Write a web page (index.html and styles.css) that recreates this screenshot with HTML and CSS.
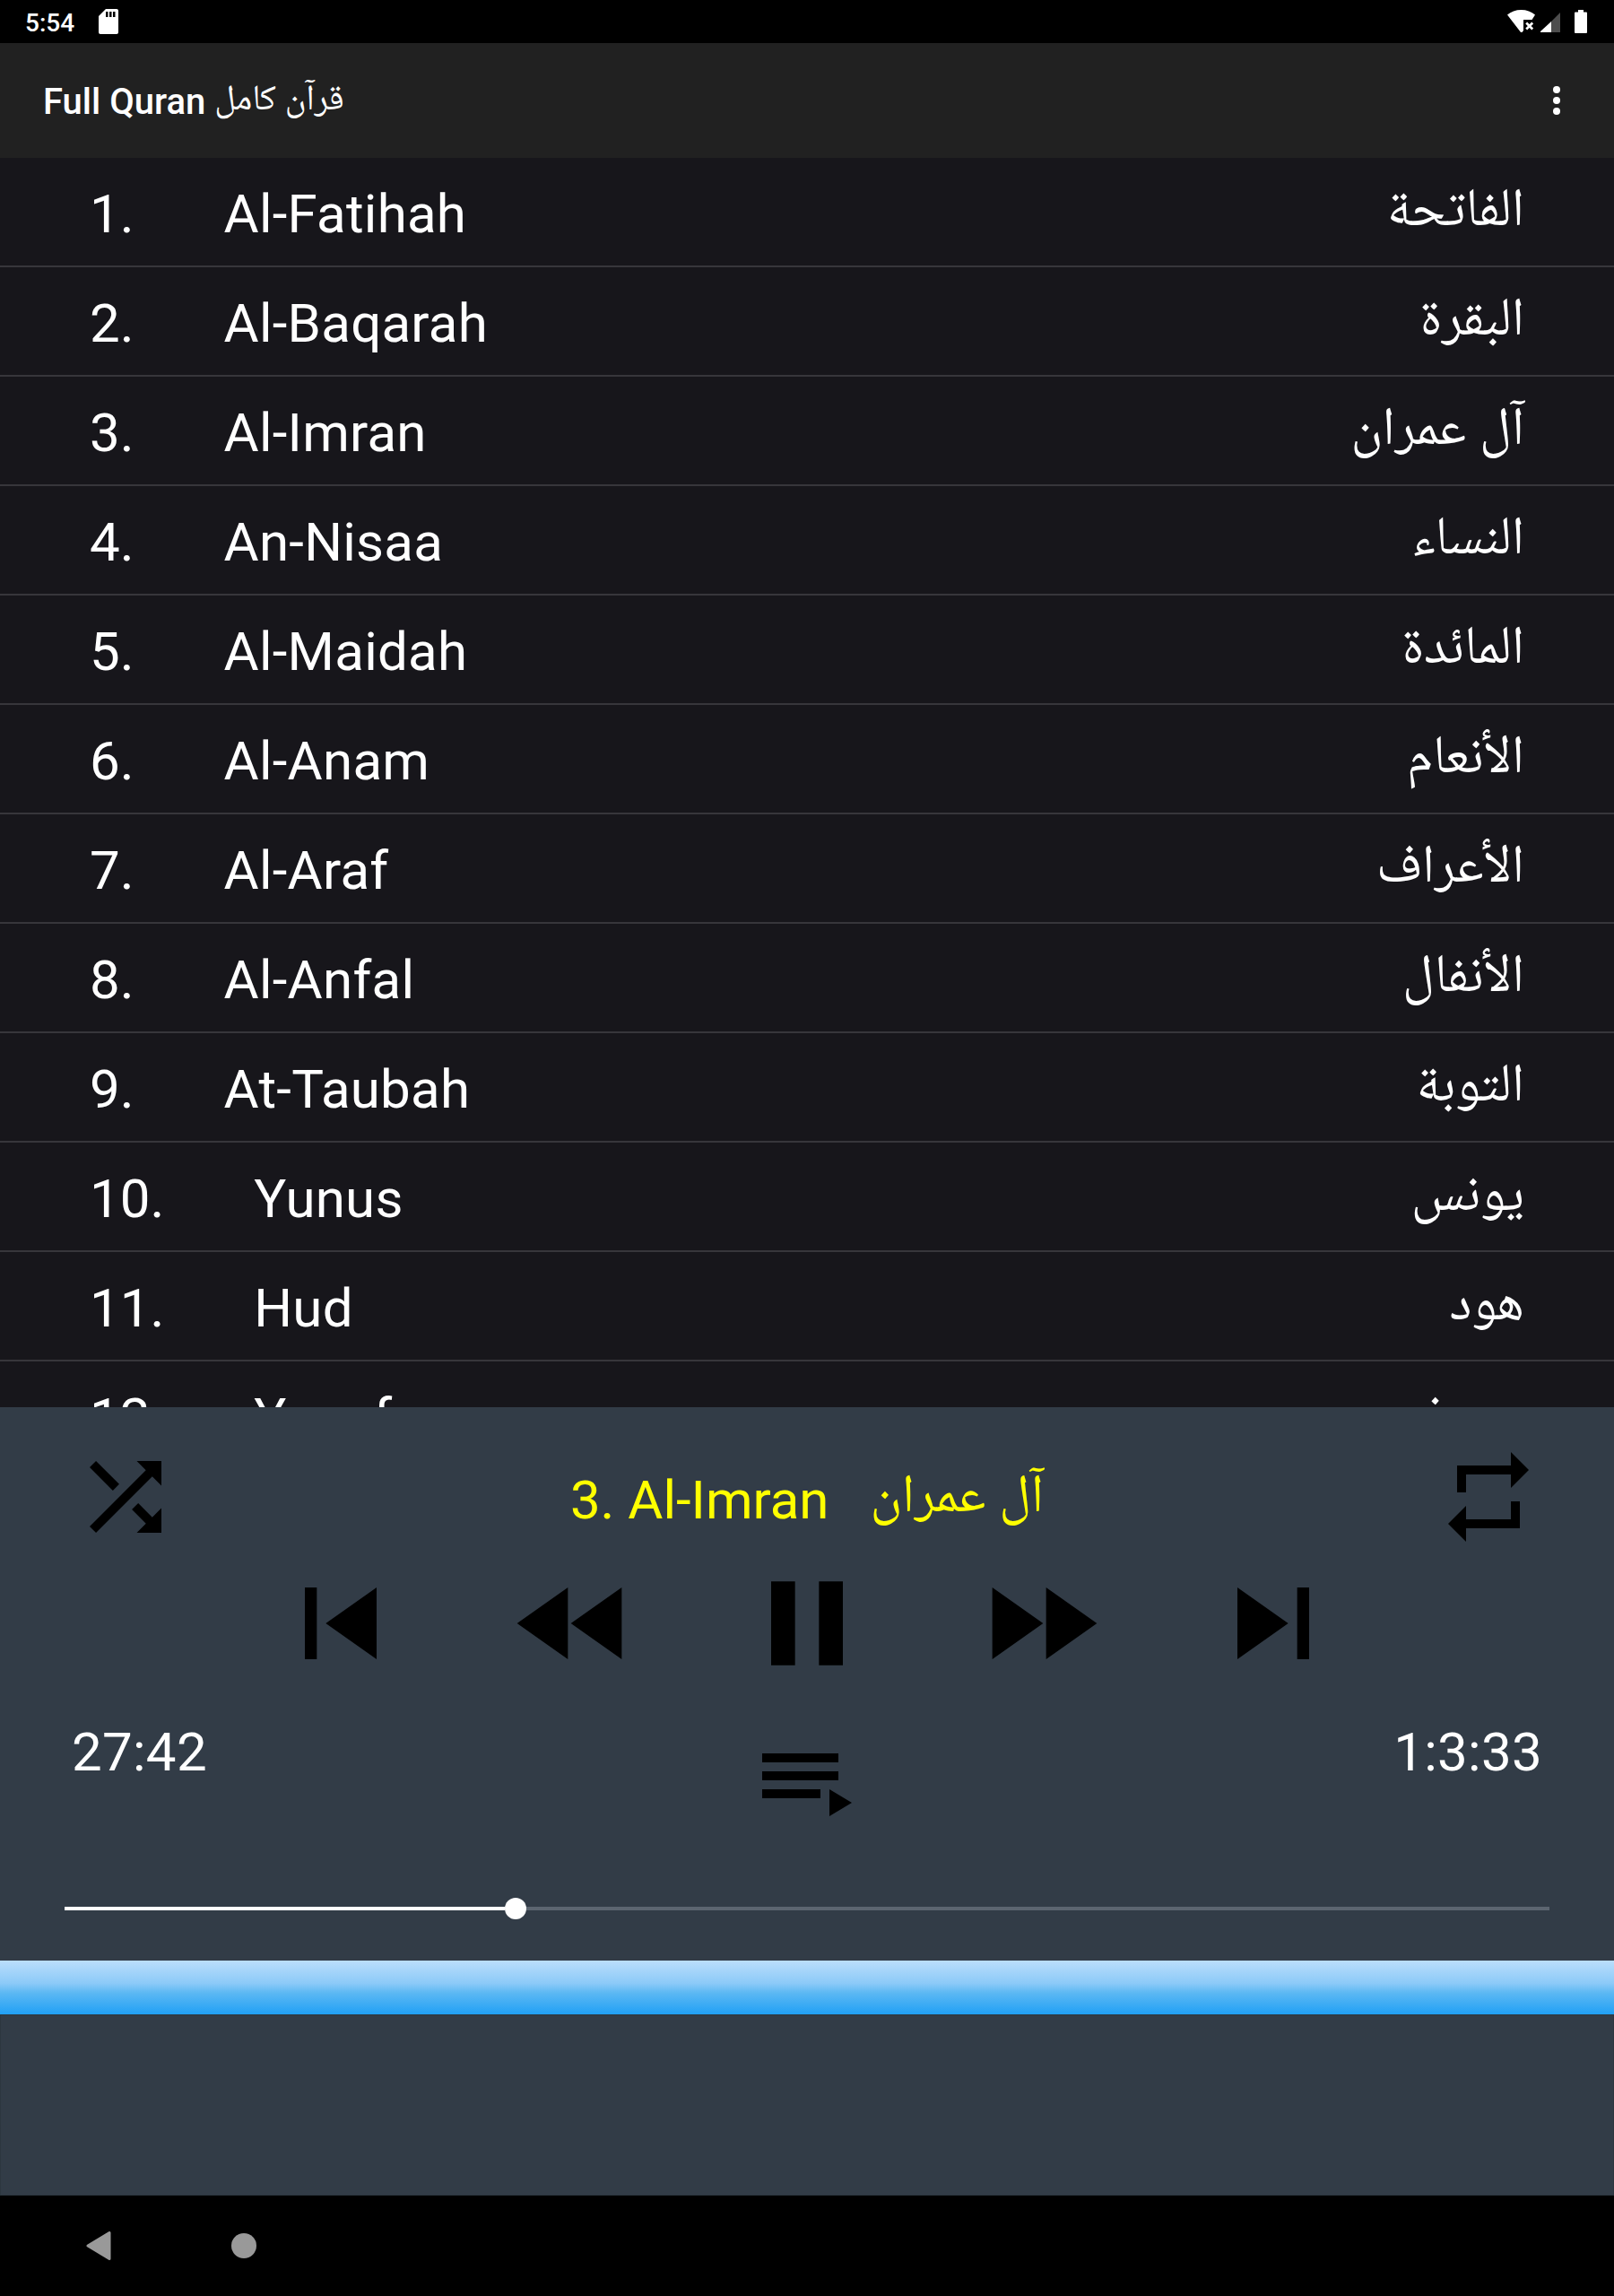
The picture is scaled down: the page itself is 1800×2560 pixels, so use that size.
FILE: index.html
```html
<!DOCTYPE html>
<html lang="en">
<head>
  <meta charset="UTF-8" />
  <title>Full Quran</title>
  <link rel="stylesheet" href="styles.css">
</head>
<body>
  <div class="status-bar">
    <span class="clock">5:54</span>
    <svg class="sd" width="22" height="28" viewBox="0 0 22 28">
      <path fill="#fff" fill-rule="evenodd" d="M8 0h12a2 2 0 0 1 2 2v24a2 2 0 0 1-2 2H2a2 2 0 0 1-2-2V8zM8 3v6h2.500V3zm4 0v6h2.500V3zm4 0v6h2.500V3z"/>
    </svg>
    <svg class="wifi" width="31" height="25" viewBox="0 0 31 25">
      <path fill="#fff" d="M0 5.500C4 2 9.500 0 15.500 0S27 2 31 5.500L27.500 11H18v12l-1.500 2h-1.500z"/>
      <path stroke="#fff" stroke-width="2.600" d="M21.200 14.500l7 7m0-7l-7 7"/>
    </svg>
    <svg class="signal" width="22" height="22" viewBox="0 0 22 22">
      <path fill="#4d4d4d" d="M22 0v22H12V10z"/>
      <path fill="#fff" d="M12 10v12H0v-1z"/>
    </svg>
    <svg class="battery" width="14" height="26" viewBox="0 0 14 26">
      <path fill="#fff" d="M4 0h6v2.500h3a1 1 0 0 1 1 1V25a1 1 0 0 1-1 1H1a1 1 0 0 1-1-1V3.500a1 1 0 0 1 1-1h3z"/>
    </svg>
  </div>

  <div class="toolbar">
    <h1><span>Full Quran</span><span class="ar">قرآن كامل</span></h1>
    <svg width="8" height="32" viewBox="0 0 8 32" fill="#fff">
      <circle cx="4" cy="4" r="4"/><circle cx="4" cy="16" r="4"/><circle cx="4" cy="28" r="4"/>
    </svg>
  </div>

  <ul class="surahs">
    <li><span class="num">1.</span><span class="name">Al-Fatihah</span><span class="ar">الفاتحة</span></li>
    <li><span class="num">2.</span><span class="name">Al-Baqarah</span><span class="ar">البقرة</span></li>
    <li><span class="num">3.</span><span class="name">Al-Imran</span><span class="ar">آل عمران</span></li>
    <li><span class="num">4.</span><span class="name">An-Nisaa</span><span class="ar">النساء</span></li>
    <li><span class="num">5.</span><span class="name">Al-Maidah</span><span class="ar">المائدة</span></li>
    <li><span class="num">6.</span><span class="name">Al-Anam</span><span class="ar">الأنعام</span></li>
    <li><span class="num">7.</span><span class="name">Al-Araf</span><span class="ar">الأعراف</span></li>
    <li><span class="num">8.</span><span class="name">Al-Anfal</span><span class="ar">الأنفال</span></li>
    <li><span class="num">9.</span><span class="name">At-Taubah</span><span class="ar">التوبة</span></li>
    <li><span class="num">10.</span><span class="name">Yunus</span><span class="ar">يونس</span></li>
    <li><span class="num">11.</span><span class="name">Hud</span><span class="ar">هود</span></li>
    <li><span class="num">12.</span><span class="name">Yusuf</span><span class="ar">يوسف</span></li>
  </ul>

  <div class="player">
    <div class="now-playing">
      <svg class="icon" viewBox="0 0 24 24"><path d="M10.590 9.170L5.410 4 4 5.410l5.170 5.170 1.420-1.410zM14.500 4l2.040 2.040L4 18.590 5.410 20 17.960 7.460 20 9.500V4h-5.500zm.33 9.410l-1.410 1.410 3.130 3.130L14.500 20H20v-5.500l-2.040 2.040-3.130-3.130z"/></svg>
      <div class="title"><span>3. Al-Imran</span><span class="ar">آل عمران</span></div>
      <svg class="icon" viewBox="0 0 24 24"><path d="M7 7h10v3l4-4-4-4v3H5v6h2V7zm10 10H7v-3l-4 4 4 4v-3h12v-6h-2v4z"/></svg>
    </div>
    <div class="controls">
      <svg viewBox="0 0 24 24"><path d="M6 6h2v12H6zm3.500 6l8.500 6V6z"/></svg>
      <svg viewBox="0 0 24 24"><path d="M11 18V6l-8.500 6 8.500 6zm.5-6l8.500 6V6l-8.500 6z"/></svg>
      <svg viewBox="0 0 24 24"><path d="M6 19h4V5H6v14zm8-14v14h4V5h-4z"/></svg>
      <svg viewBox="0 0 24 24"><path d="M4 18l8.500-6L4 6v12zm9-12v12l8.500-6L13 6z"/></svg>
      <svg viewBox="0 0 24 24"><path d="M6 18l8.500-6L6 6v12zM16 6v12h2V6h-2z"/></svg>
    </div>
    <div class="times">
      <span>27:42</span>
      <svg class="icon" viewBox="0 0 24 24"><path d="M2 7h17v2H2zm0 4h17v2H2zm0 4h13v2H2zm15 0v6l5-3z"/></svg>
      <span class="total">1:3:33</span>
    </div>
    <div class="seek">
      <div class="played"></div>
      <div class="thumb"></div>
      <div class="rest"></div>
    </div>
  </div>

  <div class="strip"></div>
  <div class="ad"></div>

  <div class="nav-bar">
    <svg width="28" height="32" viewBox="0 0 28 32"><path d="M26 1.500v29L2 16z" fill="#999" stroke="#999" stroke-width="3" stroke-linejoin="round"/></svg>
    <svg width="28" height="28" viewBox="0 0 28 28"><circle cx="14" cy="14" r="14" fill="#999"/></svg>
  </div>
</body>
</html>
```
FILE: styles.css
```css
* { box-sizing: border-box; }
body {
  margin: 0;
  width: 1800px;
  height: 2560px;
  display: flex;
  flex-direction: column;
  overflow: hidden;
  background: #000;
  color: #fff;
  font-family: Roboto, "Noto Naskh Arabic", "DejaVu Sans", sans-serif;
}
svg { display: block; flex: none; }
.ar { direction: rtl; white-space: nowrap; }

.status-bar {
  height: 48px;
  display: flex;
  align-items: flex-start;
  padding: 0 30px 0 28px;
}
.clock { font-size: 28px; font-weight: 500; line-height: 52px; width: 82px; }
.sd { margin-top: 10px; }
.wifi { margin: 11px 6px 0 auto; }
.signal { margin: 14px 16px 0 0; }
.battery { margin-top: 11px; }

.toolbar {
  height: 128px;
  display: flex;
  justify-content: space-between;
  align-items: center;
  padding: 0 60px 0 48px;
  background: #212121;
}
.toolbar h1 {
  display: flex;
  gap: 10px;
  margin: 4px 0 0;
  font-size: 40px;
  font-weight: 500;
  line-height: 62px;
}
.toolbar .ar { font-weight: 400; line-height: 52px; }

.surahs {
  height: 1393px;
  margin: 0;
  padding: 0;
  list-style: none;
  overflow: hidden;
  background: #17161b;
}
.surahs li {
  height: 122px;
  display: flex;
  padding: 0 100px;
  border-bottom: 2px solid #37363b;
  font-size: 60px;
  line-height: 125px;
}
.num { margin-right: 100px; }
.name { letter-spacing: 0.25px; }
.surahs .ar { margin-left: auto; line-height: 110px; }

.player {
  height: 617px;
  background: #323c47;
  font-size: 60px;
}
.icon { width: 120px; height: 120px; }
.now-playing {
  height: 161px;
  padding: 40px 80px 0;
  display: flex;
  justify-content: space-between;
}
.title {
  display: flex;
  gap: 46px;
  color: #ff0;
  line-height: 127px;
}
.title .ar { line-height: 112px; }
.controls {
  display: flex;
  justify-content: center;
  gap: 100px;
}
.controls svg { width: 160px; height: 160px; }
.times {
  height: 180px;
  padding: 30px 80px 0;
  display: grid;
  grid-template-columns: 1fr 120px 1fr;
  line-height: 67px;
  letter-spacing: 0.3px;
}
.total { text-align: right; }
.seek {
  display: flex;
  align-items: center;
  height: 24px;
  margin: 46px 72px 0;
}
.played { width: 491px; height: 4px; background: #fff; }
.thumb { width: 24px; height: 24px; border-radius: 50%; background: #fff; }
.rest { flex: 1; height: 4px; background: #5c6570; }

.strip { height: 60px; background: linear-gradient(#bbdefb, #8ccaf8 42%, #5cb8f3 60%, #21a0f5); }
.ad { height: 202px; background: #323c47; border: 1px solid #2c373f; }

.nav-bar {
  height: 112px;
  display: flex;
  align-items: center;
  gap: 134px;
  padding-left: 96px;
}
```
